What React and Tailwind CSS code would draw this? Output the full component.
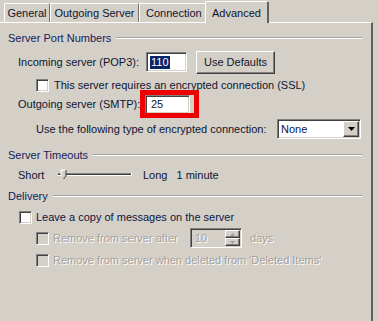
import React from "react";

const raised =
  "border border-t-white border-l-white border-r-[#404040] border-b-[#404040] shadow-[inset_-1px_-1px_0_#808080]";
const sunken =
  "border border-t-[#808080] border-l-[#808080] border-r-white border-b-white shadow-[inset_1px_1px_0_#404040,inset_-1px_-1px_0_#d4d0c8]";

function GroupHeader({ children }) {
  return (
    <div className="flex items-center h-[16px]">
      <span className="text-[#152158] whitespace-nowrap">{children}</span>
      <div className="flex-1 ml-[5px] h-[2px] border-t border-t-[#a0a0a0] border-b border-b-white" />
    </div>
  );
}

function Checkbox({ disabled }) {
  return (
    <div
      className={`w-[13px] h-[13px] shrink-0 ${sunken} ${disabled ? "bg-[#d4d0c8]" : "bg-white"}`}
    />
  );
}

const disabledText = "text-[#a3a19c] [text-shadow:1px_1px_0_#ffffff]";

export default function App() {
  return (
    <div className="w-[378px] h-[321px] bg-[#d4d0c8] overflow-hidden [font-family:Liberation_Sans,Arial,sans-serif] text-[11px] text-[#10142e] leading-none">
      {/* Tabs */}
      <div className="flex h-[22px] pl-[4px] items-end">
        <div className="w-[46px] h-[19px] shrink-0 border-l border-t border-l-white border-t-white border-r border-r-[#707070] flex items-center justify-center rounded-tl-[2px]">
          General
        </div>
        <div className="w-[89px] h-[19px] shrink-0 border-l border-t border-l-white border-t-white border-r border-r-[#707070] flex items-center justify-center">
          Outgoing Server
        </div>
        <div className="w-[66px] h-[19px] shrink-0 border-l border-t border-l-white border-t-white flex items-center pl-[6px]">
          Connection
        </div>
        <div className="relative z-10 w-[64px] h-[22px] shrink-0 -mb-[1px] bg-[#d4d0c8] border-l border-t border-l-white border-t-white border-r-2 border-r-[#606060] flex items-start justify-center pt-[6px] rounded-tl-[2px] rounded-tr-[2px]">
          Advanced
        </div>
      </div>

      {/* Panel */}
      <div className="w-[373px] h-[299px] border-t border-t-white border-r-2 border-r-[#606060] pl-[8px] pr-[9px] flex flex-col">
        <div className="mt-[7px]">
          <GroupHeader>Server Port Numbers</GroupHeader>
        </div>

        {/* Incoming */}
        <div className="mt-[4px] h-[24px] flex items-center pl-[10px]">
          <span className="w-[128px] shrink-0 whitespace-nowrap">Incoming server (POP3):</span>
          <div className={`w-[41px] h-[20px] shrink-0 bg-white ${sunken} flex items-center pl-[3px]`}>
            <span className="bg-[#0a246a] text-white px-[1px] h-[13px] flex items-center">110</span>
          </div>
          <div className={`ml-[9px] w-[79px] h-[23px] shrink-0 ${raised} flex items-center justify-center`}>
            Use Defaults
          </div>
        </div>

        {/* SSL */}
        <div className="mt-[4px] h-[14px] flex items-center pl-[28px]">
          <Checkbox />
          <span className="ml-[5px] whitespace-nowrap">This server requires an encrypted connection (SSL)</span>
        </div>

        {/* Outgoing */}
        <div className="mt-[2px] h-[20px] flex items-center pl-[10px]">
          <span className="w-[127px] shrink-0 whitespace-nowrap">Outgoing server (SMTP):</span>
          <div className="relative">
            <div className={`w-[45px] h-[19px] bg-white ${sunken} flex items-center pl-[5px]`}>25</div>
            <div className="absolute left-[-5px] top-[-5px] w-[59px] h-[28px] border-[5px] border-[#ee0000]" />
          </div>
        </div>

        {/* Encryption type */}
        <div className="mt-[5px] h-[20px] flex items-center pl-[28px]">
          <span className="whitespace-nowrap">Use the following type of encrypted connection:</span>
          <div className={`ml-auto mr-[1px] w-[84px] h-[20px] shrink-0 bg-white ${sunken} flex items-center`}>
            <span className="pl-[3px] flex-1 text-[#0a1450]">None</span>
            <div className={`w-[16px] h-[16px] mr-[1px] bg-[#d4d0c8] ${raised} flex items-center justify-center`}>
              <svg width="7" height="4" viewBox="0 0 7 4">
                <path d="M0 0 H7 L3.5 4 Z" fill="#000" />
              </svg>
            </div>
          </div>
        </div>

        <div className="mt-[8px]">
          <GroupHeader>Server Timeouts</GroupHeader>
        </div>

        {/* Slider */}
        <div className="mt-[4px] h-[16px] flex items-center pl-[10px]">
          <span className="w-[38px] shrink-0">Short</span>
          <svg width="78" height="14" viewBox="0 0 78 14" className="shrink-0">
            <rect x="2" y="5" width="74" height="1" fill="#808080" />
            <rect x="2" y="6" width="74" height="1" fill="#404040" />
            <rect x="2" y="7" width="74" height="1" fill="#ffffff" />
            <rect x="75" y="5" width="1" height="3" fill="#ffffff" />
            <path d="M5 2 H10 V8 L7.5 11 L5 8 Z" fill="#d4d0c8" />
            <path d="M5 8 V2 H10" fill="none" stroke="#ffffff" strokeWidth="1" />
            <path d="M10 2 V8 L7.5 11" fill="none" stroke="#404040" strokeWidth="1" />
          </svg>
          <span className="ml-[9px]">Long</span>
          <span className="ml-[9px]">1 minute</span>
        </div>

        <div className="mt-[5px]">
          <GroupHeader>Delivery</GroupHeader>
        </div>

        {/* Leave copy */}
        <div className="mt-[5px] h-[16px] flex items-center pl-[11px]">
          <Checkbox />
          <span className="ml-[4px] whitespace-nowrap text-[#0e1440]">Leave a copy of messages on the server</span>
        </div>

        {/* Remove after */}
        <div className="mt-[3px] h-[20px] flex items-center pl-[28px]">
          <Checkbox disabled />
          <span className={`ml-[4px] w-[137px] shrink-0 whitespace-nowrap ${disabledText}`}>Remove from server after</span>
          <div className={`w-[52px] h-[20px] shrink-0 bg-[#d4d0c8] ${sunken} flex items-center`}>
            <span className={`flex-1 pl-[4px] ${disabledText}`}>10</span>
            <div className="w-[15px] h-[16px] mr-[1px] flex flex-col">
              <div className={`flex-1 ${raised} flex items-center justify-center`}>
                <svg width="5" height="3" viewBox="0 0 5 3"><path d="M2.5 0 L5 3 H0 Z" fill="#a0a0a0" /></svg>
              </div>
              <div className={`flex-1 ${raised} flex items-center justify-center`}>
                <svg width="5" height="3" viewBox="0 0 5 3"><path d="M0 0 H5 L2.5 3 Z" fill="#a0a0a0" /></svg>
              </div>
            </div>
          </div>
          <span className={`ml-[8px] ${disabledText}`}>days</span>
        </div>

        {/* Remove deleted */}
        <div className="mt-[4px] h-[16px] flex items-center pl-[28px]">
          <Checkbox disabled />
          <span className={`ml-[4px] whitespace-nowrap ${disabledText}`}>
            Remove from server when deleted from 'Deleted Items'
          </span>
        </div>
      </div>
    </div>
  );
}
